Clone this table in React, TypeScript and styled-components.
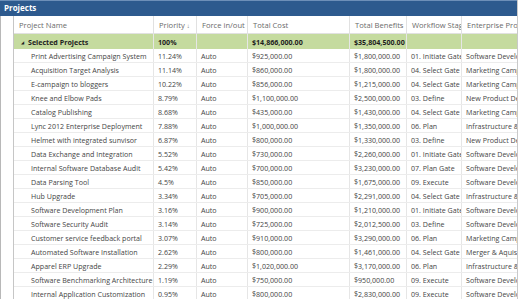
import React from 'react'
import styled, { createGlobalStyle } from 'styled-components'

const GlobalStyle = createGlobalStyle`
  html, body {
    margin: 0;
    padding: 0;
    background: #ffffff;
  }
  body {
    font-family: 'Open Sans', 'Noto Sans', sans-serif;
  }
`

const Panel = styled.div`
  width: 518px;
  height: 299px;
  overflow: hidden;
  border-right: 1px solid #c9c9c9;
  box-sizing: border-box;
`

const TitleBar = styled.div`
  height: 16px;
  box-sizing: border-box;
  background: #2d5a8e;
  border-top: 1px solid #6d8fb8;
  color: #ffffff;
  font-size: 8px;
  font-weight: 700;
  line-height: 14px;
  padding-left: 4px;
`

const Grid = styled.table`
  border-collapse: collapse;
  table-layout: fixed;
  width: 517px;
  font-size: 7.1px;
  color: #454545;
  border-left: 1px solid #b8b8b8;
`

const HeadCell = styled.th`
  height: 17px;
  padding: 0 0 0 5px;
  font-size: 7.6px;
  font-weight: 400;
  text-align: left;
  color: #6a6a6a;
  white-space: nowrap;
  overflow: hidden;
  border-right: 1px solid #e1e1e1;
  border-bottom: 1px solid #e1e1e1;
`

const Gutter = styled.td`
  padding: 0;
  border-right: 1px solid #c6c6c6;
  background: #ffffff;
`

const HeadGutter = styled.th`
  padding: 0;
  border-right: 1px solid #c6c6c6;
`

const Cell = styled.td<{ $indent?: boolean }>`
  height: 13px;
  padding: 0 0 0 ${({ $indent }) => ($indent ? '17px' : '4px')};
  white-space: nowrap;
  overflow: hidden;
  border-right: 1px solid #e6e6e6;
  border-bottom: 1px solid #ececec;
`

const GroupCell = styled.td`
  height: 15px;
  padding: 0 0 0 4px;
  background: #c5db9f;
  font-weight: 700;
  color: #1e1e1e;
  white-space: nowrap;
  overflow: hidden;
  border-right: 1px solid #e6e6e6;
`

const Caret = styled.span`
  display: inline-block;
  font-size: 3.5px;
  margin: 0 4px 0 3px;
  vertical-align: 1px;
`

const SortArrow = styled.span`
  font-size: 6px;
  margin-left: 2px;
`

type Row = [string, string, string, string, string, string]

const rows: Row[] = [
  ['Print Advertising Campaign System', '11.24%', '$925,000.00', '$1,800,000.00', '01. Initiate Gate', 'Software Development'],
  ['Acquisition Target Analysis', '11.14%', '$860,000.00', '$1,800,000.00', '04. Select Gate', 'Marketing Campaign'],
  ['E-campaign to bloggers', '10.22%', '$856,000.00', '$1,215,000.00', '04. Select Gate', 'Marketing Campaign'],
  ['Knee and Elbow Pads', '8.79%', '$1,100,000.00', '$2,500,000.00', '03. Define', 'New Product Development'],
  ['Catalog Publishing', '8.68%', '$435,000.00', '$1,430,000.00', '04. Select Gate', 'Marketing Campaign'],
  ['Lync 2012 Enterprise Deployment', '7.88%', '$1,000,000.00', '$1,350,000.00', '06. Plan', 'Infrastructure & Facilities'],
  ['Helmet with integrated sunvisor', '6.87%', '$800,000.00', '$1,330,000.00', '03. Define', 'New Product Development'],
  ['Data Exchange and Integration', '5.52%', '$730,000.00', '$2,260,000.00', '01. Initiate Gate', 'Software Development'],
  ['Internal Software Database Audit', '5.42%', '$700,000.00', '$3,230,000.00', '07. Plan Gate', 'Software Development'],
  ['Data Parsing Tool', '4.5%', '$850,000.00', '$1,675,000.00', '09. Execute', 'Software Development'],
  ['Hub Upgrade', '3.34%', '$705,000.00', '$2,291,000.00', '04. Select Gate', 'Infrastructure & Facilities'],
  ['Software Development Plan', '3.16%', '$900,000.00', '$1,210,000.00', '01. Initiate Gate', 'Software Development'],
  ['Software Security Audit', '3.14%', '$725,000.00', '$2,012,500.00', '03. Define', 'Software Development'],
  ['Customer service feedback portal', '3.07%', '$910,000.00', '$3,290,000.00', '06. Plan', 'Marketing Campaign'],
  ['Automated Software Installation', '2.62%', '$800,000.00', '$1,461,000.00', '04. Select Gate', 'Merger & Aquisition'],
  ['Apparel ERP Upgrade', '2.29%', '$1,020,000.00', '$3,170,000.00', '06. Plan', 'Infrastructure & Facilities'],
  ['Software Benchmarking Architecture Layer', '1.19%', '$750,000.00', '$950,000.00', '09. Execute', 'Software Development'],
  ['Internal Application Customization', '0.95%', '$800,000.00', '$2,830,000.00', '09. Execute', 'Software Development'],
]

const widths = [13, 140, 43, 51, 102, 57, 55, 56]

export default function App() {
  return (
    <>
      <GlobalStyle />
      <Panel>
        <TitleBar>Projects</TitleBar>
        <Grid>
          <colgroup>
            {widths.map((w, i) => (
              <col key={i} style={{ width: w }} />
            ))}
          </colgroup>
          <thead>
            <tr>
              <HeadGutter />
              <HeadCell>Project Name</HeadCell>
              <HeadCell>
                Priority<SortArrow>↓</SortArrow>
              </HeadCell>
              <HeadCell>Force in/out</HeadCell>
              <HeadCell>Total Cost</HeadCell>
              <HeadCell>Total Benefits</HeadCell>
              <HeadCell>Workflow Stage</HeadCell>
              <HeadCell>Enterprise Project Type</HeadCell>
            </tr>
          </thead>
          <tbody>
            <tr>
              <Gutter />
              <GroupCell>
                <Caret>◢</Caret>Selected Projects
              </GroupCell>
              <GroupCell>100%</GroupCell>
              <GroupCell />
              <GroupCell>$14,866,000.00</GroupCell>
              <GroupCell>$35,804,500.00</GroupCell>
              <GroupCell />
              <GroupCell />
            </tr>
            {rows.map((r) => (
              <tr key={r[0]}>
                <Gutter />
                <Cell $indent>{r[0]}</Cell>
                <Cell>{r[1]}</Cell>
                <Cell>Auto</Cell>
                <Cell>{r[2]}</Cell>
                <Cell>{r[3]}</Cell>
                <Cell>{r[4]}</Cell>
                <Cell>{r[5]}</Cell>
              </tr>
            ))}
          </tbody>
        </Grid>
      </Panel>
    </>
  )
}
